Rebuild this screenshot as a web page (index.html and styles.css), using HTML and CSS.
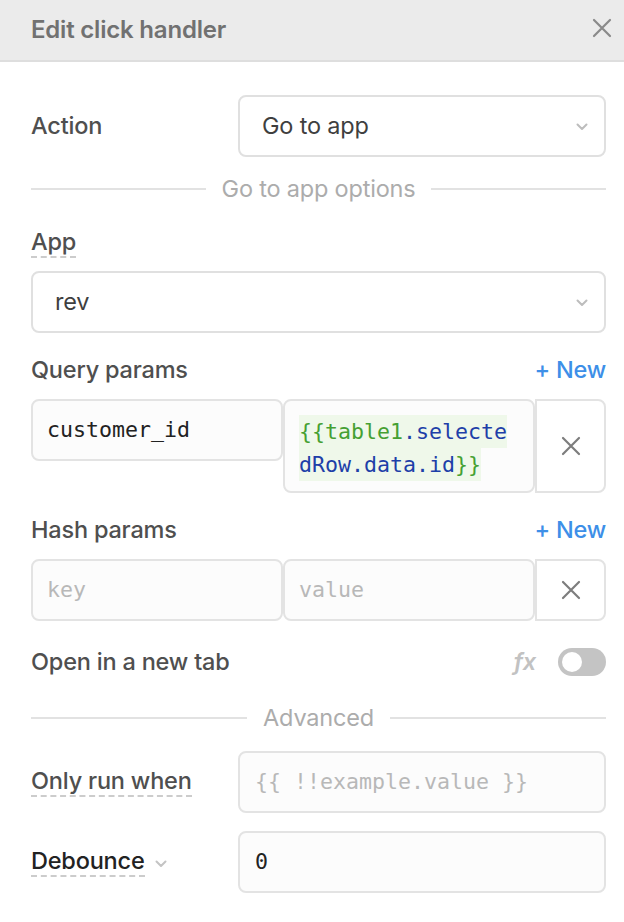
FILE: index.html
```html
<!DOCTYPE html>
<html lang="en">
<head>
    <meta charset="UTF-8">
    <meta name="viewport" content="width=device-width, initial-scale=1.0">
    <title>Edit click handler</title>
    <link rel="stylesheet" href="styles.css">
</head>
<body>
    <!-- Header -->
    <div class="panel-header">
        <span class="panel-title">Edit click handler</span>
        <svg class="close-icon" width="20" height="20" viewBox="0 0 20 20">
            <path d="M2 2 L18 18 M18 2 L2 18" stroke="#8a8a8a" stroke-width="2.2" stroke-linecap="round"/>
        </svg>
    </div>

    <div class="panel-body">
        <div class="inline-row action-row">
            <span class="label">Action</span>
            <div class="select">
                <span>Go to app</span>
                <svg class="chevron" width="12" height="8" viewBox="0 0 12 8"><path d="M1.5 1.5 L6 6 L10.5 1.5" fill="none" stroke="#bdbdbd" stroke-width="2" stroke-linecap="round" stroke-linejoin="round"/></svg>
            </div>
        </div>

        <div class="divider options-divider"><span>Go to app options</span></div>

        <div class="field-label app-label"><span class="label dashed">App</span></div>
        <div class="select app-select">
            <span>rev</span>
            <svg class="chevron" width="12" height="8" viewBox="0 0 12 8"><path d="M1.5 1.5 L6 6 L10.5 1.5" fill="none" stroke="#bdbdbd" stroke-width="2" stroke-linecap="round" stroke-linejoin="round"/></svg>
        </div>

        <div class="section-head query-head">
            <span class="label">Query params</span>
            <span class="add-new">+ New</span>
        </div>
        <div class="param-row">
            <div class="param-input key-input"><span class="mono">customer_id</span></div>
            <div class="param-input value-input">
                <div class="code-line"><span class="tok-brace">{{table1</span><span class="tok-id">.selecte</span></div>
                <div class="code-line"><span class="tok-id">dRow.data.id</span><span class="tok-brace">}}</span></div>
            </div>
            <div class="param-remove">
                <svg width="20" height="20" viewBox="0 0 20 20"><path d="M2 2 L18 18 M18 2 L2 18" stroke="#7d7d7d" stroke-width="2.2" stroke-linecap="round"/></svg>
            </div>
        </div>

        <div class="section-head hash-head">
            <span class="label">Hash params</span>
            <span class="add-new">+ New</span>
        </div>
        <div class="param-row short">
            <div class="param-input key-input"><span class="mono placeholder">key</span></div>
            <div class="param-input value-input"><span class="mono placeholder">value</span></div>
            <div class="param-remove">
                <svg width="20" height="20" viewBox="0 0 20 20"><path d="M2 2 L18 18 M18 2 L2 18" stroke="#7d7d7d" stroke-width="2.2" stroke-linecap="round"/></svg>
            </div>
        </div>

        <div class="section-head tab-row">
            <span class="label">Open in a new tab</span>
            <div class="tab-controls">
                <span class="fx">fx</span>
                <span class="toggle"><span class="knob"></span></span>
            </div>
        </div>

        <div class="divider advanced-divider"><span>Advanced</span></div>

        <div class="inline-row run-row">
            <span class="label-cell"><span class="label dashed">Only run when</span></span>
            <div class="text-input"><span class="mono placeholder">{{ !!example.value }}</span></div>
        </div>

        <div class="inline-row debounce-row">
            <span class="label-cell">
                <span class="label dashed dark">Debounce</span>
                <svg class="small-chevron" width="12" height="8" viewBox="0 0 12 8"><path d="M1.5 1.5 L6 6 L10.5 1.5" fill="none" stroke="#c4c4c4" stroke-width="2" stroke-linecap="round" stroke-linejoin="round"/></svg>
            </span>
            <div class="text-input"><span class="mono">0</span></div>
        </div>
    </div>
</body>
</html>
```

FILE: styles.css
```css
/* Edit click handler panel */
body {
    margin: 0;
    background: #ffffff;
    font-family: Inter, "Noto Sans", sans-serif;
    font-size: 23.5px;
    line-height: 28px;
    letter-spacing: -0.2px;
    color: #555555;
}

.panel-header {
    height: 60px;
    border-bottom: 2px solid #dedede;
    background: #ebebeb;
    display: flex;
    align-items: center;
    justify-content: space-between;
    padding: 0 12px 0 31px;
}

.panel-title {
    font-size: 24px;
    font-weight: 600;
    color: #717171;
}

.close-icon {
    margin-top: -4px;
}

.panel-body {
    padding: 0 18px 0 31px;
}

.label {
    line-height: 28px;
    font-weight: 500;
    color: #4f4f4f;
}

.label.dark {
    color: #222222;
}

.dashed {
    display: inline-block;
    vertical-align: top;
    border-bottom: 2px dashed #cccccc;
}

/* Rows with label on the left */
.inline-row {
    display: flex;
    align-items: center;
}

.inline-row > .label,
.label-cell {
    width: 207px;
    flex-shrink: 0;
    display: flex;
    align-items: center;
}

.action-row {
    margin-top: 33px;
}

.select {
    flex: 1;
    height: 62px;
    box-sizing: border-box;
    border: 2px solid #e0e0e0;
    border-radius: 8px;
    background: #ffffff;
    display: flex;
    align-items: center;
    justify-content: space-between;
    padding: 0 16px 0 22px;
    color: #3f3f3f;
}

.chevron {
    margin-top: 2px;
}

/* Section dividers */
.divider {
    display: flex;
    align-items: center;
    gap: 16px;
    line-height: 28px;
    color: #acacac;
}

.divider::before,
.divider::after {
    content: "";
    flex: 1;
    height: 2px;
    background: #e2e2e2;
}

.options-divider {
    margin-top: 18px;
}

.advanced-divider {
    margin-top: 28px;
}

.app-label {
    margin-top: 25px;
    height: 30px;
}

.app-select {
    margin-top: 13px;
}

/* Params */
.section-head {
    display: flex;
    align-items: center;
    justify-content: space-between;
    line-height: 28px;
}

.query-head {
    margin-top: 23px;
}

.hash-head {
    margin-top: 23px;
}

.add-new {
    color: #3d8fe8;
    font-weight: 500;
}

.param-row {
    margin-top: 15px;
    display: flex;
    align-items: flex-start;
}

.param-input {
    width: 252px;
    box-sizing: border-box;
    border: 2px solid #e3e3e3;
    border-radius: 8px;
    background: #fcfcfc;
}

.key-input {
    height: 62px;
    display: flex;
    align-items: center;
    padding-left: 14px;
}

.value-input {
    height: 94px;
    padding: 14px 12px 0 14px;
}

.param-row.short .value-input {
    height: 62px;
    padding: 0 0 0 14px;
    display: flex;
    align-items: center;
}

.param-remove {
    flex: 1;
    height: 94px;
    box-sizing: border-box;
    border: 2px solid #e3e3e3;
    border-radius: 0 8px 8px 0;
    display: flex;
    align-items: center;
    justify-content: center;
}

.param-row.short .param-remove {
    height: 62px;
}

.mono {
    font-family: "DejaVu Sans Mono", "Liberation Mono", monospace;
    font-size: 21.6px;
    letter-spacing: 0;
    color: #222222;
}

.mono.placeholder {
    color: #b8b8b8;
}

.code-line {
    display: table;
    font-family: "DejaVu Sans Mono", "Liberation Mono", monospace;
    font-size: 21.6px;
    letter-spacing: 0;
    line-height: 33px;
    background: #eff8ea;
}

.tok-brace {
    color: #45a032;
}

.tok-id {
    color: #1e3fa8;
}

/* Open in a new tab */
.tab-row {
    margin-top: 27px;
}

.tab-controls {
    display: flex;
    align-items: center;
    gap: 22px;
}

.fx {
    font-style: italic;
    font-weight: 600;
    color: #c2c2c2;
}

.toggle {
    width: 48px;
    height: 28px;
    border-radius: 14px;
    background: #c4c4c4;
    display: flex;
    align-items: center;
    padding-left: 4px;
    box-sizing: border-box;
}

.knob {
    width: 20px;
    height: 20px;
    border-radius: 50%;
    background: #ffffff;
}

/* Advanced fields */
.run-row {
    margin-top: 19px;
}

.debounce-row {
    margin-top: 18px;
}

.small-chevron {
    margin-left: 10px;
    margin-top: 4px;
}

.text-input {
    flex: 1;
    height: 62px;
    box-sizing: border-box;
    border: 2px solid #e3e3e3;
    border-radius: 8px;
    background: #fcfcfc;
    display: flex;
    align-items: center;
    padding-left: 15px;
}
```
